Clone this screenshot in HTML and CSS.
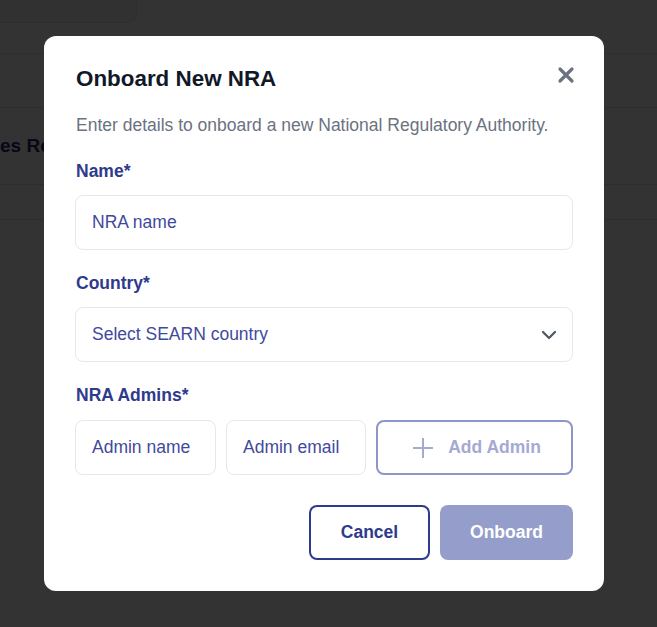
FILE: index.html
```html
<!DOCTYPE html>
<html lang="en">
<head>
<meta charset="utf-8">
<title>Onboard New NRA</title>
<link rel="stylesheet" href="styles.css">
</head>
<body>
<div class="page">
  <div class="topbar">
    <div class="topcard"></div>
  </div>
  <div class="band"></div>
  <div class="section-title">es Registered</div>
  <div class="band small"></div>
  <div class="band tiny"></div>
</div>

<div class="overlay">
  <div class="modal" role="dialog" aria-labelledby="t">
    <div class="head">
      <h2 id="t" class="title">Onboard New NRA</h2>
      <button class="close" aria-label="Close">
        <svg width="18" height="18" viewBox="0 0 18 18"><path d="M3 3 L15 15 M15 3 L3 15" stroke="#6b7280" stroke-width="3.2" stroke-linecap="round" fill="none"/></svg>
      </button>
    </div>
    <p class="subtitle">Enter details to onboard a new National Regulatory Authority.</p>

    <div class="field first">
      <label class="label">Name*</label>
      <div class="input"><span class="ph">NRA name</span></div>
    </div>

    <div class="field">
      <label class="label">Country*</label>
      <div class="input select"><span class="ph">Select SEARN country</span>
        <svg width="16" height="10" viewBox="0 0 16 10"><path d="M2 2 L8 8 L14 2" stroke="#4b5563" stroke-width="2.2" stroke-linecap="round" stroke-linejoin="round" fill="none"/></svg>
      </div>
    </div>

    <div class="field">
      <label class="label">NRA Admins*</label>
      <div class="admins">
        <div class="input small-in"><span class="ph">Admin name</span></div>
        <div class="input small-in"><span class="ph">Admin email</span></div>
        <button class="add">
          <svg width="22" height="22" viewBox="0 0 22 22"><path d="M11 1 V21 M1 11 H21" stroke="#a3aad4" stroke-width="2" fill="none"/></svg>
          <span>Add Admin</span>
        </button>
      </div>
    </div>

    <div class="actions">
      <button class="btn cancel">Cancel</button>
      <button class="btn onboard">Onboard</button>
    </div>
  </div>
</div>
</body>
</html>
```

FILE: styles.css
```css
* { box-sizing: border-box; }
html, body { margin: 0; padding: 0; }
body {
  font-family: "Liberation Sans", Arial, sans-serif;
  background: #ffffff;
  width: 657px;
  height: 627px;
  overflow: hidden;
}

.page { height: 627px; }
.topbar { height: 54px; border-bottom: 1px solid #e5e7eb; }
.topcard {
  width: 137px;
  height: 23px;
  border: 1px solid #e5e7eb;
  border-top: none;
  border-left: none;
  border-bottom-right-radius: 8px;
  background: #f3f4f6;
}
.band { height: 54px; border-bottom: 1px solid #e5e7eb; }
.section-title {
  height: 77px;
  display: flex;
  align-items: center;
  font-size: 19px;
  font-weight: 700;
  color: #1e2a78;
  border-bottom: 1px solid #e5e7eb;
}
.band.small { height: 35px; }
.band.tiny { height: 35px; border-bottom: none; }

.overlay {
  position: fixed;
  inset: 0;
  background: rgba(0, 0, 0, 0.8);
  display: flex;
  align-items: flex-start;
  justify-content: flex-start;
  padding: 36px 0 0 44px;
}

.modal {
  width: 560px;
  height: 555px;
  background: #ffffff;
  border-radius: 12px;
  padding: 29px 31px 31px 31px;
  display: flex;
  flex-direction: column;
}

.head {
  display: flex;
  justify-content: space-between;
  align-items: center;
  padding-left: 1px;
}
.title {
  margin: 0;
  font-size: 22.4px;
  line-height: 28px;
  font-weight: 700;
  color: #111827;
}
.close {
  border: none;
  background: none;
  padding: 0;
  margin-right: -2px;
  margin-top: -8px;
  width: 18px;
  height: 18px;
  display: flex;
}

.subtitle {
  margin: 19px 0 0 1px;
  font-size: 17.5px;
  line-height: 26px;
  color: #6b7280;
}

.field { display: flex; flex-direction: column; margin-top: 20px; }
.label {
  font-size: 17.5px;
  line-height: 26px;
  font-weight: 700;
  color: #2e3a8c;
  margin: 0 0 11px 1px;
}

.input {
  height: 55px;
  border: 1.5px solid #e5e7eb;
  border-radius: 8px;
  display: flex;
  align-items: center;
  padding: 0 16px;
  font-size: 17.5px;
}
.ph { color: #3f4a9e; }
.select { justify-content: space-between; padding-right: 15px; }

.admins {
  display: flex;
  gap: 10px;
  margin-top: 1px;
}
.small-in { width: 141px; flex: none; white-space: nowrap; }
.small-in + .small-in { width: 140px; }
.add {
  flex: 1;
  height: 55px;
  border: 2px solid #8e96c8;
  border-radius: 8px;
  background: #ffffff;
  display: flex;
  align-items: center;
  justify-content: center;
  gap: 14px;
  font-family: inherit;
  font-size: 17.5px;
  font-weight: 700;
  color: #a3aad4;
  padding: 0 0 0 4px;
}

.actions {
  display: flex;
  justify-content: flex-end;
  gap: 10px;
  margin-top: 30px;
}
.btn {
  height: 55px;
  border-radius: 8px;
  font-family: inherit;
  font-size: 17.5px;
  font-weight: 700;
  padding: 0;
}
.cancel {
  width: 121px;
  background: #ffffff;
  border: 2px solid #2e3a8c;
  color: #2e3a8c;
}
.onboard {
  width: 133px;
  background: #959ecb;
  border: none;
  color: #ffffff;
}
```
